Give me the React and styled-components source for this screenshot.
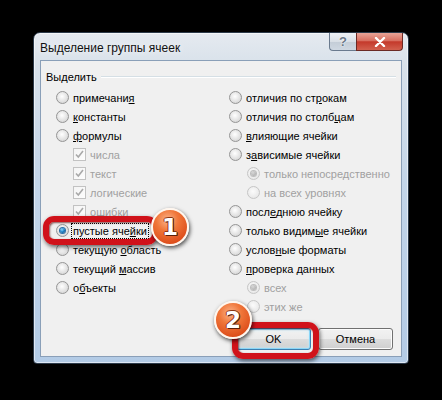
import React from 'react';
import styled, { createGlobalStyle } from 'styled-components';

const GlobalStyle = createGlobalStyle`
  html, body { margin: 0; padding: 0; background: #000; }
  body { font-family: "Liberation Sans", Arial, sans-serif; }
`;

const leftItems = [
  { label: 'примечани', u: 'я', after: '' },
  { label: '', u: 'к', after: 'онстанты' },
  { label: '', u: 'ф', after: 'ормулы' },
  { label: 'числа', box: true, disabled: true, indent: 17 },
  { label: 'текст', box: true, disabled: true, indent: 17 },
  { label: 'логические', box: true, disabled: true, indent: 17 },
  { label: 'о', u: 'ш', after: 'ибки', box: true, disabled: true, indent: 17 },
  { label: 'пустые яче', u: 'й', after: 'ки', checked: true, focus: true },
  { label: 'текущую ', u: 'о', after: 'бласть' },
  { label: 'текущий ', u: 'м', after: 'ассив' },
  { label: 'о', u: 'б', after: 'ъекты' },
];

const rightItems = [
  { label: 'отличия по ст', u: 'р', after: 'окам' },
  { label: 'отличия по столб', u: 'ц', after: 'ам' },
  { label: '', u: 'в', after: 'лияющие ячейки' },
  { label: 'з', u: 'а', after: 'висимые ячейки' },
  { label: 'только непосредственно', disabled: true, checked: true, indent: 18 },
  { label: 'на всех уровнях', disabled: true, indent: 18 },
  { label: 'посл', u: 'е', after: 'днюю ячейку' },
  { label: 'только видим', u: 'ы', after: 'е ячейки' },
  { label: 'услов', u: 'н', after: 'ые форматы' },
  { label: '', u: 'п', after: 'роверка данных' },
  { label: 'всех', disabled: true, checked: true, indent: 18 },
  { label: 'этих же', disabled: true, indent: 18 },
];

function Item({ item }) {
  return (
    <Row $indent={item.indent || 0}>
      {item.box ? (
        <CheckBox $disabled={item.disabled}>
          <svg width="11" height="11" viewBox="0 0 11 11">
            <path d="M2 5.5 L4.3 8 L9 2" fill="none" stroke="#a9a9a9" strokeWidth="1.6" />
          </svg>
        </CheckBox>
      ) : (
        <Radio $checked={item.checked} $disabled={item.disabled} />
      )}
      <Label $disabled={item.disabled} $focus={item.focus}>
        {item.label}
        {item.u && <u>{item.u}</u>}
        {item.after}
      </Label>
    </Row>
  );
}

export default function App() {
  return (
    <Stage>
      <GlobalStyle />
      <Window>
        <TitleBar>
          <Title>Выделение группы ячеек</Title>
          <Controls>
            <HelpButton>?</HelpButton>
            <CloseButton>
              <svg width="14" height="10" viewBox="0 0 14 10">
                <path d="M3 1 L11 9 M11 1 L3 9" stroke="#fff" strokeWidth="2.4" strokeLinecap="round" />
              </svg>
            </CloseButton>
          </Controls>
        </TitleBar>
        <Client>
          <GroupHeader>
            <span>Выделить</span>
            <GroupLine />
          </GroupHeader>
          <Columns>
            <Column>
              {leftItems.map((it, i) => <Item key={i} item={it} />)}
            </Column>
            <Column>
              {rightItems.map((it, i) => <Item key={i} item={it} />)}
            </Column>
          </Columns>
          <ButtonRow>
            <DlgButton $default>OK</DlgButton>
            <DlgButton>Отмена</DlgButton>
          </ButtonRow>
        </Client>
      </Window>

      <Highlight style={{ left: 43, top: 216, width: 115, height: 29 }} />
      <Highlight style={{ left: 232, top: 322, width: 87, height: 37 }} />
      <Badge style={{ left: 151, top: 208 }}>1</Badge>
      <Badge style={{ left: 214, top: 301 }}>2</Badge>
    </Stage>
  );
}

const Stage = styled.div`
  position: relative;
  width: 442px;
  height: 400px;
  box-sizing: border-box;
  padding: 32px 0 0 33px;
  background: #000;
  overflow: hidden;
`;

const Window = styled.div`
  width: 376px;
  height: 332px;
  box-sizing: border-box;
  display: flex;
  flex-direction: column;
  padding: 0 6px 6px 6px;
  border-radius: 7px 7px 4px 4px;
  border: 1px solid #2c3a4a;
  background: linear-gradient(to bottom, #e5eaf0 0%, #d8e1ea 10%, #c3d5e9 45%, #b3cbe6 100%);
  box-shadow: inset 0 0 0 1px rgba(255, 255, 255, 0.55);
`;

const TitleBar = styled.div`
  height: 27px;
  display: flex;
  justify-content: space-between;
  align-items: flex-start;
`;

const Title = styled.div`
  padding: 8px 0 0 0;
  font-size: 12px;
  line-height: 14px;
  color: #111;
  text-shadow: 0 0 6px rgba(255, 255, 255, 0.9);
`;

const Controls = styled.div`
  display: flex;
  margin-right: -1px;
`;

const HelpButton = styled.div`
  width: 27px;
  height: 18px;
  box-sizing: border-box;
  border: 1px solid #6a7a8e;
  border-top: none;
  border-right: none;
  border-radius: 0 0 0 4px;
  background: linear-gradient(to bottom, #eef1f5 0%, #d9dfe6 50%, #c3ccd6 51%, #cfd8e2 100%);
  color: #6b7887;
  font-size: 13px;
  font-weight: bold;
  line-height: 17px;
  text-align: center;
  text-shadow: 0 0 2px #fff, 0 0 1px #fff;
`;

const CloseButton = styled.div`
  width: 47px;
  height: 18px;
  box-sizing: border-box;
  display: flex;
  align-items: center;
  justify-content: center;
  border: 1px solid #6b2a24;
  border-top: none;
  border-radius: 0 0 4px 0;
  background: linear-gradient(to bottom, #e8a497 0%, #d86f60 45%, #c4392b 52%, #d2604e 100%);
`;

const Client = styled.div`
  flex: 1;
  display: flex;
  flex-direction: column;
  box-sizing: border-box;
  padding: 9px 0 6px 0;
  background: #f0f0f0;
  border: 1px solid #8a9fb8;
  font-size: 11px;
  color: #000;
`;

const GroupHeader = styled.div`
  display: flex;
  align-items: center;
  height: 14px;
  padding: 0 5px;
  gap: 4px;
  font-size: 11px;
`;

const GroupLine = styled.div`
  flex: 1;
  height: 0;
  border-top: 1px solid #d5dfe5;
  border-bottom: 1px solid #ffffff;
`;

const Columns = styled.div`
  display: grid;
  grid-template-columns: 173px 1fr;
  margin-top: 4px;
  padding-left: 15px;
`;

const Column = styled.div`
  display: flex;
  flex-direction: column;
`;

const Row = styled.div`
  display: flex;
  align-items: center;
  height: 19px;
  padding-left: ${p => p.$indent}px;
`;

const Radio = styled.span`
  position: relative;
  flex: none;
  width: 13px;
  height: 13px;
  box-sizing: border-box;
  border-radius: 50%;
  margin-right: 4px;
  border: 1px solid ${p => (p.$disabled ? '#c6c6c6' : '#959595')};
  background: ${p =>
    p.$disabled
      ? 'radial-gradient(circle at 45% 40%, #fbfbfb 0%, #ececec 60%, #dedede 100%)'
      : 'radial-gradient(circle at 45% 40%, #ffffff 0%, #e3e3e3 55%, #cbcbcb 100%)'};
  &::after {
    content: '';
    display: ${p => (p.$checked ? 'block' : 'none')};
    position: absolute;
    left: 3px;
    top: 3px;
    width: 5px;
    height: 5px;
    border-radius: 50%;
    background: ${p =>
      p.$disabled
        ? 'radial-gradient(circle at 40% 35%, #d8d8d8 0%, #a3a3a3 100%)'
        : 'radial-gradient(circle at 40% 35%, #8fd8ff 0%, #1b7fc4 50%, #0b3f6e 100%)'};
    box-shadow: ${p => (p.$disabled ? '0 0 0 1px #bdbdbd' : '0 0 0 1px #2a6fa8')};
  }
`;

const CheckBox = styled.span`
  flex: none;
  width: 13px;
  height: 13px;
  box-sizing: border-box;
  margin-right: 4px;
  display: flex;
  align-items: center;
  justify-content: center;
  border: 1px solid #c2c2c2;
  background: linear-gradient(135deg, #f4f4f4 0%, #fdfdfd 100%);
`;

const Label = styled.span`
  white-space: nowrap;
  line-height: 14px;
  color: ${p => (p.$disabled ? '#a0a0a0' : '#000')};
  outline: ${p => (p.$focus ? '1px dotted #000' : 'none')};
  padding: ${p => (p.$focus ? '0 1px' : '0')};
  margin-left: ${p => (p.$focus ? '-1px' : '0')};
  u { text-decoration: underline; }
`;

const ButtonRow = styled.div`
  display: flex;
  justify-content: flex-end;
  gap: 7px;
  margin-top: auto;
  padding-right: 8px;
`;

const DlgButton = styled.div`
  width: 75px;
  height: 22px;
  box-sizing: border-box;
  display: flex;
  align-items: center;
  justify-content: center;
  border-radius: 3px;
  font-size: 11px;
  color: #000;
  border: 1px solid ${p => (p.$default ? '#3c7fb1' : '#707070')};
  background: linear-gradient(to bottom, #f2f2f2 0%, #ebebeb 49%, #dddddd 50%, #cfcfcf 100%);
  box-shadow: ${p =>
    p.$default ? 'inset 0 0 0 1px #8bd6f7, inset 0 0 3px 1px #c2ecfd' : 'inset 0 0 0 1px #fcfcfc'};
`;

const Highlight = styled.div`
  position: absolute;
  box-sizing: border-box;
  border: 6px solid #d0121a;
  border-radius: 11px;
  box-shadow: 1px 2px 4px rgba(0, 0, 0, 0.6), inset 1px 1px 2px rgba(80, 0, 0, 0.65);
`;

const Badge = styled.div`
  position: absolute;
  width: 38px;
  height: 38px;
  box-sizing: border-box;
  border-radius: 50%;
  border: 2px solid #fff6ee;
  display: flex;
  align-items: center;
  justify-content: center;
  background: radial-gradient(circle at 42% 30%, #fbb48b 0%, #f0773a 35%, #de4f1c 75%, #c63d14 100%);
  box-shadow: 1px 2px 4px rgba(0, 0, 0, 0.7);
  font-family: "DejaVu Sans", "Liberation Sans", sans-serif;
  font-weight: bold;
  font-size: 23px;
  color: #fff;
  text-shadow: 1px 1px 0 #5a200a, -1px 0 0 #8a3412, 0 -1px 0 #8a3412, 1px 0 0 #5a200a;
`;
